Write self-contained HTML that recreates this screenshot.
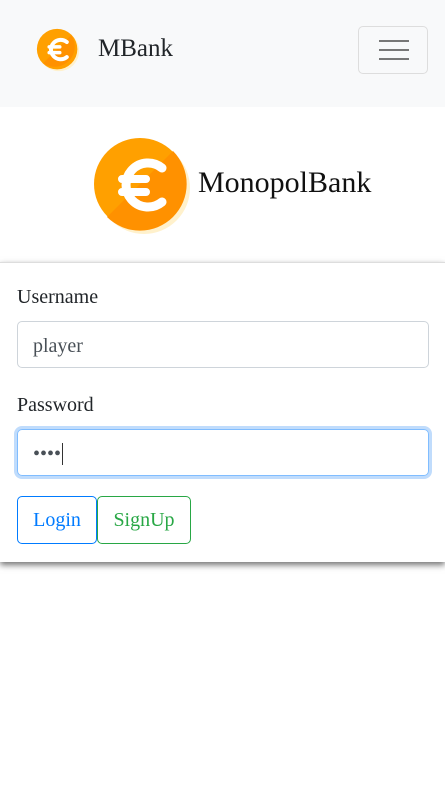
<!DOCTYPE html>
<html><head><style>
body{margin:0;width:445px;height:790px;background:#fff;font-family:"Liberation Serif",serif;position:relative;overflow:hidden}
.nav{position:absolute;left:0;top:0;width:445px;height:107px;background:#f8f9fa}
.brand{position:absolute;left:98px;top:35px;font-size:25px;color:#212529}
.tog{position:absolute;left:358px;top:26px;width:70px;height:48px;border:1px solid #ddd;border-radius:5px;box-sizing:border-box}
.tog i{position:absolute;left:20px;width:30px;height:2px;background:#777}
.title{position:absolute;left:198px;top:166px;font-size:30px;color:#111}
.card{position:absolute;left:0;top:262px;width:445px;height:299px;border-top:1px solid #ddd;box-shadow:0 3px 6px rgba(0,0,0,.55);background:#fff}
.lbl{position:absolute;left:17px;font-size:20px;color:#212529}
.inp{position:absolute;left:17px;width:412px;height:47px;border:1px solid #ced4da;border-radius:5px;box-sizing:border-box;font-size:20px;color:#495057;padding:12px 15px}
.btn{position:absolute;top:496px;height:48px;border-radius:5px;box-sizing:border-box;font-size:20px;padding:12px 0;text-align:center}
</style></head><body>
<div class="nav">
<svg style="position:absolute;left:36px;top:28px" width="44" height="44" viewBox="0 0 100 100"><circle cx="52" cy="52" r="46" fill="#fff1cc"/><circle cx="48" cy="48" r="46" fill="#ffa000"/><path d="M80 16 L16 80 A46 46 0 0 0 80 16Z" fill="#ff9100"/><path d="M70 32 A22 22 0 1 0 70 66" stroke="#fff" stroke-width="9" fill="none" stroke-linecap="round"/><path d="M30 43H54M30 56H54" stroke="#fff" stroke-width="8" stroke-linecap="round"/></svg>
<div class="brand">MBank</div>
<div class="tog"><i style="top:13px"></i><i style="top:22px"></i><i style="top:31px"></i></div>
</div>
<svg style="position:absolute;left:92px;top:136px" width="100" height="100" viewBox="0 0 100 100"><circle cx="52" cy="52" r="46" fill="#fff1cc"/><circle cx="48" cy="48" r="46" fill="#ffa000"/><path d="M81 15 L15 81 A46 46 0 0 0 81 15Z" fill="#ff9100"/><path d="M70 32 A22 22 0 1 0 70 66" stroke="#fff" stroke-width="9" fill="none" stroke-linecap="round"/><path d="M30 43H54M30 56H54" stroke="#fff" stroke-width="8" stroke-linecap="round"/></svg>
<div class="title">MonopolBank</div>
<div class="card"></div>
<div class="lbl" style="top:286px">Username</div>
<div class="inp" style="top:321px;padding-top:13px">player</div>
<div class="lbl" style="top:394px">Password</div>
<div class="inp" style="top:429px;border-color:#80bdff;box-shadow:0 0 0 3px #c0dcfc;padding-top:13px">••••<span style="border-left:1px solid #333;margin-left:1px"></span></div>
<div class="btn" style="left:17px;width:80px;border:1px solid #007bff;color:#007bff">Login</div>
<div class="btn" style="left:97px;width:94px;border:1px solid #28a745;color:#28a745">SignUp</div>
</body></html>
